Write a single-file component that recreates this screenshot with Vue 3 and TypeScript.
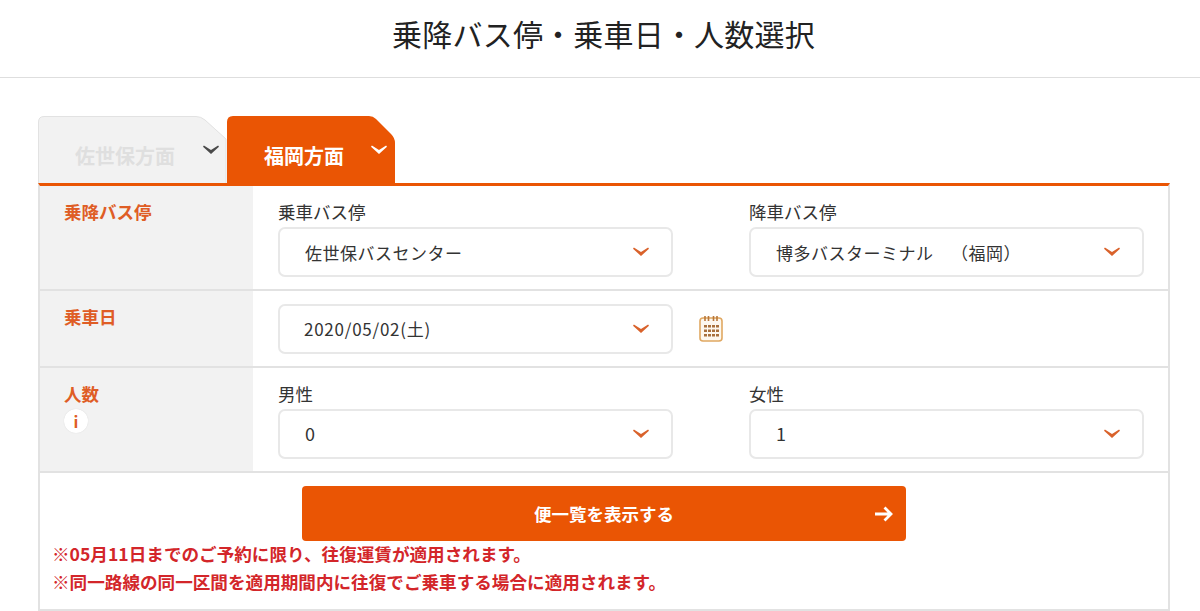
<script setup lang="ts">
interface Opt { label: string; value: string }
const stops: Opt[] = [
  { label: '乗車バス停', value: '佐世保バスセンター' },
  { label: '降車バス停', value: '博多バスターミナル\u00A0\u00A0\u3000（福岡）' },
]
const people: Opt[] = [
  { label: '男性', value: '0' },
  { label: '女性', value: '1' },
]
const chevron = 'M0 1.800 .9 .5 8 4.900 15.100 .5 16 1.800 8 9Z'
</script>

<template>
  <div class="page">
    <header class="head"><h1>乗降バス停・乗車日・人数選択</h1></header>
    <main class="wrap">
      <div class="tabs">
        <div class="tab off">
          <svg class="shape" width="192" height="67" viewBox="0 0 192 67">
            <path d="M.5 67V6Q.5.5 6 .5H158Q163 .5 167 4L188 23V67" fill="#f2f2f2" stroke="#e2e2e2" />
          </svg>
          <span class="tab-text">佐世保方面</span>
          <svg class="chev" width="16" height="10" viewBox="0 0 16 10"><path :d="chevron" fill="#4a4a4a" /></svg>
        </div>
        <div class="tab on">
          <svg class="shape" width="168" height="67" viewBox="0 0 168 67">
            <path d="M0 67V6Q0 0 6 0H142Q146 0 149 3L164 18Q168 22 168 27V67Z" fill="#ea5504" />
          </svg>
          <span class="tab-text">福岡方面</span>
          <svg class="chev" width="16" height="10" viewBox="0 0 16 10"><path :d="chevron" fill="#fff" /></svg>
        </div>
      </div>

      <div class="table">
        <section class="row r1">
          <div class="th">乗降バス停</div>
          <div class="td pair">
            <div v-for="s in stops" :key="s.label" class="field">
              <div class="lab">{{ s.label }}</div>
              <div class="select">
                <span>{{ s.value }}</span>
                <svg class="arrow" width="16" height="10" viewBox="0 0 16 10"><path :d="chevron" fill="#d9622b" /></svg>
              </div>
            </div>
          </div>
        </section>

        <section class="row r2">
          <div class="th">乗車日</div>
          <div class="td date">
            <div class="select date-select">
              <span>2020/05/02(土)</span>
              <svg class="arrow" width="16" height="10" viewBox="0 0 16 10"><path :d="chevron" fill="#d9622b" /></svg>
            </div>
            <svg class="cal" width="26" height="28" viewBox="0 0 26 28">
              <rect x="2" y="4" width="22" height="23" rx="3" fill="#fdf8ef" stroke="#e0a862" stroke-width="1.6" />
              <path d="M7 2v5M10.500 2v5M15.500 2v5M19 2v5" stroke="#b9773a" stroke-width="1.600" />
              <g fill="#a8703c">
                <rect x="6" y="11" width="3" height="2.500" /><rect x="10" y="11" width="3" height="2.500" /><rect x="14" y="11" width="3" height="2.500" /><rect x="18" y="11" width="3" height="2.500" />
                <rect x="6" y="15.500" width="3" height="2.500" /><rect x="10" y="15.500" width="3" height="2.500" /><rect x="14" y="15.500" width="3" height="2.500" /><rect x="18" y="15.500" width="3" height="2.500" />
                <rect x="6" y="20" width="3" height="2.500" /><rect x="10" y="20" width="3" height="2.500" /><rect x="14" y="20" width="3" height="2.500" /><rect x="18" y="20" width="3" height="2.500" />
              </g>
            </svg>
          </div>
        </section>

        <section class="row r3">
          <div class="th">
            人数
            <div class="info">i</div>
          </div>
          <div class="td pair">
            <div v-for="p in people" :key="p.label" class="field">
              <div class="lab">{{ p.label }}</div>
              <div class="select">
                <span class="num">{{ p.value }}</span>
                <svg class="arrow" width="16" height="10" viewBox="0 0 16 10"><path :d="chevron" fill="#d9622b" /></svg>
              </div>
            </div>
          </div>
        </section>

        <section class="foot">
          <button class="go" type="button">
            <span>便一覧を表示する</span>
            <svg class="go-arrow" width="19" height="16" viewBox="0 0 19 16"><path d="M1 8H17M10.500 1.500 17 8 10.500 14.500" fill="none" stroke="#fff" stroke-width="2.800" /></svg>
          </button>
          <p class="note first">※05月11日までのご予約に限り、往復運賃が適用されます。</p>
          <p class="note">※同一路線の同一区間を適用期間内に往復でご乗車する場合に適用されます。</p>
        </section>
      </div>
    </main>
  </div>
</template>

<style>
html, body { margin: 0; background: #fff; }
</style>

<style scoped>
.page {
  width: 1200px;
  height: 611px;
  overflow: hidden;
  font-family: "Noto Sans CJK JP", "Noto Sans", sans-serif;
  color: #333;
}
.head {
  height: 77px;
  border-bottom: 1px solid #dedede;
  display: flex;
  align-items: center;
  justify-content: center;
}
.head h1 {
  margin: 0 0 12px 7px;
  font-size: 30px;
  font-weight: 400;
  letter-spacing: 0.2px;
  line-height: 44px;
  color: #222;
}
.wrap {
  width: 1132px;
  margin: 38px 0 0 38px;
}
.tabs {
  display: flex;
  height: 67px;
}
.tab {
  position: relative;
  height: 67px;
  font-size: 20px;
  font-weight: 700;
}
.tab.off { width: 189px; color: #dfdfdf; }
.tab.on { width: 168px; color: #fff; }
.shape { position: absolute; left: 0; top: 0; }
.tab-text { position: absolute; top: 25px; line-height: 30px; white-space: nowrap; }
.off .tab-text { left: 37px; }
.on .tab-text { left: 37px; }
.chev { position: absolute; top: 29px; }
.off .chev { left: 165px; }
.on .chev { left: 144px; }
.table {
  border-top: 3px solid #ea5504;
  border-left: 2px solid #e2e2e2;
  border-right: 2px solid #e2e2e2;
  border-bottom: 2px solid #e2e2e2;
  height: 428px;
  box-sizing: border-box;
}
.row {
  display: flex;
  border-bottom: 2px solid #e2e2e2;
  box-sizing: border-box;
}
.r1 { height: 105px; }
.r2 { height: 77px; }
.r3 { height: 105px; }
.th {
  width: 213px;
  flex: none;
  background: #f2f2f2;
  color: #df5d25;
  font-size: 17.500px;
  font-weight: 700;
  line-height: 26px;
  padding: 13px 0 0 24px;
  box-sizing: border-box;
}
.td { flex: 1; min-width: 0; }
.pair {
  display: flex;
  gap: 76px;
  padding: 13px 0 0 25px;
}
.field { width: 395px; }
.lab {
  font-size: 17.500px;
  line-height: 26px;
  color: #333;
  margin-bottom: 2px;
}
.select {
  width: 395px;
  height: 50px;
  box-sizing: border-box;
  border: 2px solid #e8e8e8;
  border-radius: 7px;
  background: #fff;
  display: flex;
  align-items: center;
  justify-content: space-between;
  padding: 0 22px 0 25px;
  font-size: 17px;
  letter-spacing: 0.5px;
  color: #333;
}
.date-select { padding-left: 24px; letter-spacing: 0.75px; }
.num { font-size: 18px; line-height: 22px; margin-top: -3px; }
.arrow { flex: none; }
.date {
  display: flex;
  align-items: center;
  gap: 25px;
  padding: 0 0 0 25px;
}
.cal { flex: none; margin-top: -1px; }
.info {
  width: 24px;
  height: 24px;
  margin-top: 2px;
  border-radius: 50%;
  background: #fff;
  box-shadow: 0 0 1px #cfcfcf;
  text-align: center;
  font-size: 16px;
  line-height: 24px;
  font-weight: 700;
  color: #df5d25;
}
.foot {
  padding: 13px 0 0 12px;
}
.go {
  display: flex;
  position: relative;
  align-items: center;
  justify-content: center;
  width: 604px;
  height: 55px;
  margin: 0 0 0 250px;
  padding: 0;
  border: 0;
  border-radius: 4px;
  background: #ea5504;
  color: #fff;
  font: 700 17.500px "Noto Sans CJK JP", sans-serif;
}
.go-arrow { position: absolute; right: 13px; top: 20px; }
.note {
  margin: 0;
  font-size: 17.600px;
  line-height: 28px;
  font-weight: 700;
  color: #d3262a;
  white-space: nowrap;
}
.note.first { margin-top: -1px; }
</style>
